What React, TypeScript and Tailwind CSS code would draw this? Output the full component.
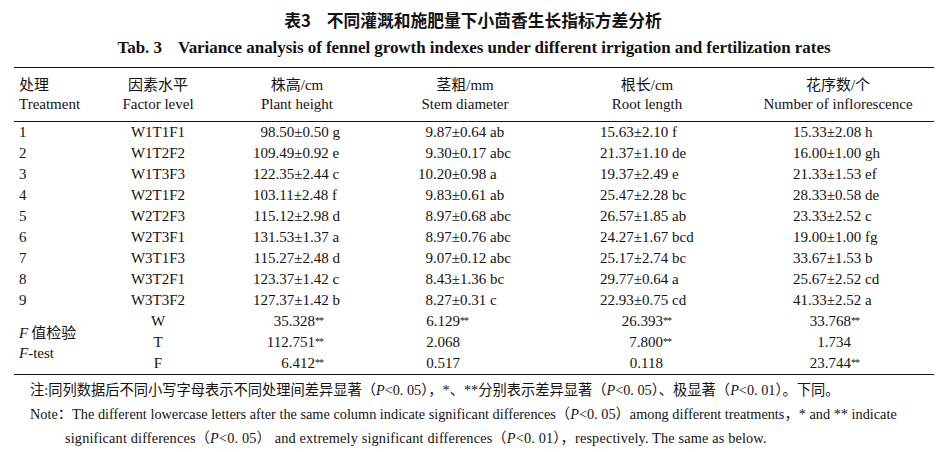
const serif = "font-['Liberation_Serif','Noto_Sans_CJK_SC',serif]";

const rows = [
  ["1", "W1T1F1", "98.50±0.50 g", "9.87±0.64 ab", "15.63±2.10 f", "15.33±2.08 h"],
  ["2", "W1T2F2", "109.49±0.92 e", "9.30±0.17 abc", "21.37±1.10 de", "16.00±1.00 gh"],
  ["3", "W1T3F3", "122.35±2.44 c", "10.20±0.98 a", "19.37±2.49 e", "21.33±1.53 ef"],
  ["4", "W2T1F2", "103.11±2.48 f", "9.83±0.61 ab", "25.47±2.28 bc", "28.33±0.58 de"],
  ["5", "W2T2F3", "115.12±2.98 d", "8.97±0.68 abc", "26.57±1.85 ab", "23.33±2.52 c"],
  ["6", "W2T3F1", "131.53±1.37 a", "8.97±0.76 abc", "24.27±1.67 bcd", "19.00±1.00 fg"],
  ["7", "W3T1F3", "115.27±2.48 d", "9.07±0.12 abc", "25.17±2.74 bc", "33.67±1.53 b"],
  ["8", "W3T2F1", "123.37±1.42 c", "8.43±1.36 bc", "29.77±0.64 a", "25.67±2.52 cd"],
  ["9", "W3T3F2", "127.37±1.42 b", "8.27±0.31 c", "22.93±0.75 cd", "41.33±2.52 a"],
];

const ftest = [
  ["W", ["35.328", true], ["6.129", true], ["26.393", true], ["33.768", true]],
  ["T", ["112.751", true], ["2.068", false], ["7.800", true], ["1.734", false]],
  ["F", ["6.412", true], ["0.517", false], ["0.118", false], ["23.744", true]],
] as const;

// left padding / integer box per value column, so the decimals line up
const dataPad = ["pl-[37px]", "pl-[40px]", "pl-[48px]", "pl-[51px]"];
const intBox = ["w-[22.5px]", "w-[15px]", "w-[15px]", "w-[15px]"];
const fPad = ["pl-[39px]", "pl-[22px]", "pl-[51px]", "pl-[49px]"];

const grid = "grid grid-cols-[86px_116px_162px_174px_190px_192px]";

function Value({ v, col }: { v: string; col: number }) {
  const i = v.indexOf(".");
  return (
    <div className={`${dataPad[col]} whitespace-pre`}>
      <span className={`inline-block ${intBox[col]} text-right`}>{v.slice(0, i)}</span>
      {v.slice(i)}
    </div>
  );
}

function FVal({ v, star, col }: { v: string; star: boolean; col: number }) {
  return (
    <div className={`${fPad[col]} whitespace-pre`}>
      <span className="inline-block w-[60px] text-right">{v}</span>
      {star && <sup className="text-[10px] relative -top-[2px] tracking-[-1px]">**</sup>}
    </div>
  );
}

export default function App() {
  return (
    <div className={`w-[946px] h-[452px] bg-white text-[#141212] ${serif}`}>
      <div className="pt-[10px] text-center text-[16.75px] leading-[20px] font-bold font-['Noto_Sans_CJK_SC',sans-serif]">
        <span>表3</span>
        <span className="ml-[16px]">不同灌溉和施肥量下小茴香生长指标方差分析</span>
      </div>
      <div className="mt-[8px] pl-[2px] text-center text-[17px] leading-[20px] font-bold tracking-[-0.05px]">
        <span>Tab. 3</span>
        <span className="ml-[16px]">Variance analysis of fennel growth indexes under different irrigation and fertilization rates</span>
      </div>

      <div className="mx-[14px] mt-[9px] w-[920px] border-t-[1.5px] border-b-[1.5px] border-[#141212] text-[15px]">
        <div className={`${grid} border-b border-[#141212] pt-[8px] pb-[7px] leading-[19px]`}>
          <div className="pl-[5px]">
            <div>处理</div>
            <div>Treatment</div>
          </div>
          <div className="text-center">
            <div>因素水平</div>
            <div>Factor level</div>
          </div>
          <div className="text-center">
            <div>株高/cm</div>
            <div>Plant height</div>
          </div>
          <div className="text-center">
            <div>茎粗/mm</div>
            <div>Stem diameter</div>
          </div>
          <div className="text-center">
            <div>根长/cm</div>
            <div>Root length</div>
          </div>
          <div className="text-center">
            <div>花序数/个</div>
            <div>Number of inflorescence</div>
          </div>
        </div>

        {rows.map((r) => (
          <div key={r[0]} className={`${grid} h-[21px] items-center leading-[21px]`}>
            <div className="pl-[5px]">{r[0]}</div>
            <div className="text-center">{r[1]}</div>
            {r.slice(2).map((v, c) => (
              <Value key={c} v={v} col={c} />
            ))}
          </div>
        ))}

        <div className={`${grid} grid-rows-[21px_21px_21px] leading-[21px]`}>
          <div className="row-span-3 pl-[5px] pt-[12px] leading-[20px] flex flex-col">
            <div>
              <i>F</i>
              <span className="ml-[3px]">值检验</span>
            </div>
            <div>
              <i>F</i>-test
            </div>
          </div>
          {ftest.map((f) => (
            <div key={f[0]} className="contents">
              <div className="text-center">{f[0]}</div>
              {f.slice(1).map((x, c) => {
                const [v, star] = x as readonly [string, boolean];
                return <FVal key={c} v={v} star={star} col={c} />;
              })}
            </div>
          ))}
        </div>
      </div>

      <div className="pl-[30px] pt-[3px] leading-[24px] text-[14.25px]">
        <div className="whitespace-nowrap">
          注:同列数据后不同小写字母表示不同处理间差异显著（<i>P</i>&lt;0. 05），*、**分别表示差异显著（<i>P</i>&lt;0. 05）、极显著（<i>P</i>&lt;0. 01）。下同。
        </div>
        <div className="whitespace-nowrap text-[14.3px]">
          Note：The different lowercase letters after the same column indicate significant differences（<i>P</i>&lt;0. 05）among different treatments，* and ** indicate
        </div>
        <div className="pl-[35px] whitespace-nowrap text-[14.3px] tracking-[0.15px]">
          significant differences（<i>P</i>&lt;0. 05） and extremely significant differences（<i>P</i>&lt;0. 01），respectively. The same as below.
        </div>
      </div>
    </div>
  );
}
